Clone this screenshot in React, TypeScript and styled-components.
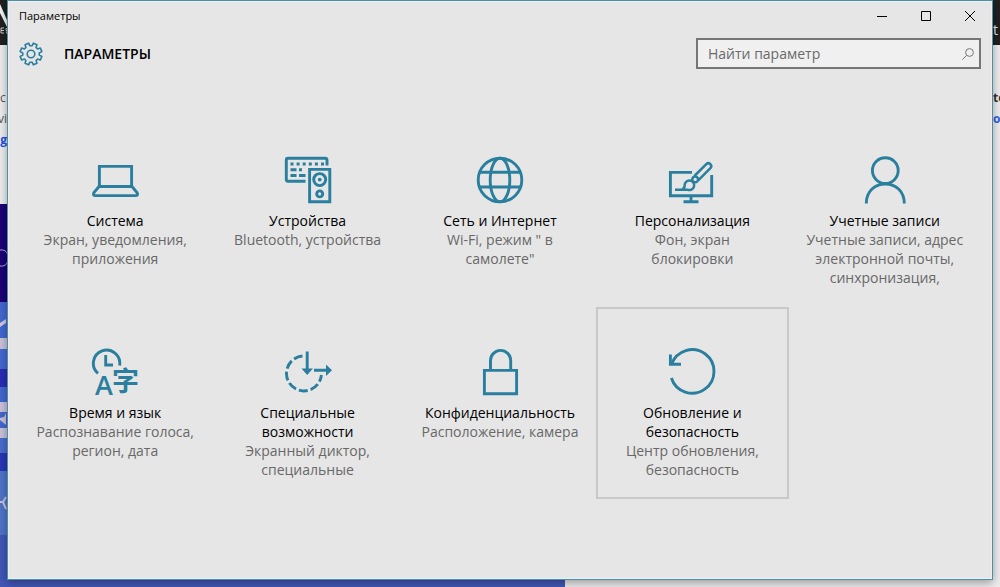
import React from "react";
import styled, { createGlobalStyle } from "styled-components";

const ACCENT = "#2a7f9e";
const SANS = '"Open Sans", "Noto Sans", "Noto Sans CJK SC", sans-serif';

const GlobalStyle = createGlobalStyle`
  * { box-sizing: border-box; }
  body { margin: 0; background: #e0e0e0; font-family: ${SANS}; }
  button, input { font-family: inherit; }
`;

const Desktop = styled.div`
  position: relative;
  min-height: 100vh;
  padding: 0 7px 7px;
  overflow: hidden;
  display: flex;
`;

/* Web page lying behind the settings window */
const Backdrop = styled.div`
  position: absolute;
  inset: 0;
  display: flex;
  flex-direction: column;
  background: #ededed;
`;

const SiteHeader = styled.div`
  height: 45px;
  flex: none;
  background: #202020;
  display: flex;
  justify-content: space-between;
`;

const Article = styled.div`
  flex: none;
  height: 159px;
  padding-top: 42px;
`;

const ArticleLine = styled.div`
  display: flex;
  justify-content: space-between;
  height: 21px;
`;

const Sliver = styled.span<{ $color?: string; $bold?: boolean; $end?: boolean }>`
  display: flex;
  justify-content: ${(p) => (p.$end ? "flex-end" : "flex-start")};
  width: 7px;
  overflow: hidden;
  white-space: nowrap;
  font-size: 12px;
  line-height: 21px;
  font-weight: ${(p) => (p.$bold ? 700 : 400)};
  color: ${(p) => p.$color ?? "#555"};
`;

const HeaderSliver = styled(Sliver)`
  align-self: flex-end;
  font-size: 14px;
  line-height: 30px;
`;

const Photo = styled.div`
  flex: 1;
  width: 565px;
  display: flex;
  flex-direction: column;
  background: #4157b8;
`;

const Band = styled.div<{ $h: number; $c: string }>`
  flex: none;
  height: ${(p) => p.$h}px;
  background: ${(p) => p.$c};
  overflow: hidden;
  svg { display: block; }
`;

const Window = styled.main`
  position: relative;
  flex: 1;
  min-width: 0;
  border: 1px solid #4a90a8;
  background: #e6e6e6;
  box-shadow: inset 0 0 0 1px #efefee, 0 3px 9px rgba(0, 0, 0, 0.35);
`;

const TitleBar = styled.header`
  display: flex;
  justify-content: space-between;
  align-items: center;
  height: 29px;
  padding-left: 11px;
  font-size: 11px;
  line-height: 16px;
  color: #000;
`;

const Controls = styled.div`
  display: flex;
  height: 29px;
`;

const ControlButton = styled.button`
  width: 44px;
  height: 29px;
  padding: 0;
  border: 0;
  background: transparent;
  display: flex;
  align-items: center;
  justify-content: center;
  &:hover { background: #d0d0d0; }
`;

const HeaderRow = styled.div`
  display: flex;
  align-items: center;
  height: 47px;
  padding: 0 11px;
`;

const Heading = styled.h1`
  flex: 1;
  margin: 0 0 0 21px;
  font-size: 14px;
  line-height: 20px;
  font-weight: 600;
  color: #000;
`;

const SearchBox = styled.label`
  display: flex;
  align-items: center;
  width: 285px;
  height: 31px;
  padding: 0 5px 0 10px;
  border: 2px solid #767676;
  background: #f0f0f0;
`;

const SearchInput = styled.input`
  flex: 1;
  min-width: 0;
  padding: 0;
  border: 0;
  outline: 0;
  background: transparent;
  font-size: 14px;
  line-height: 20px;
  color: #000;
  &::placeholder { color: #6a6a6a; opacity: 1; }
`;

const Grid = styled.nav`
  display: grid;
  grid-template-columns: repeat(5, 1fr);
  grid-auto-rows: 192px;
  padding: 38px 11px 80px;
`;

const Tile = styled.a<{ $active?: boolean }>`
  display: flex;
  flex-direction: column;
  align-items: center;
  padding-top: 39px;
  border: 2px solid ${(p) => (p.$active ? "#c9c9c9" : "transparent")};
  text-align: center;
  text-decoration: none;
  font-size: 14px;
  line-height: 19px;
  white-space: pre-line;
`;

const TileIcon = styled.svg`
  width: 48px;
  height: 48px;
  margin-bottom: 7px;
  fill: none;
  stroke: ${ACCENT};
  stroke-width: 2.9;
`;

const TileTitle = styled.span`
  color: #000;
`;

const TileText = styled.span`
  color: #686868;
`;

const Glyph = styled.text<{ $cjk?: boolean }>`
  fill: ${ACCENT};
  stroke: none;
  font-size: 27px;
  font-weight: ${(p) => (p.$cjk ? 700 : 600)};
  font-family: ${(p) => (p.$cjk ? '"Noto Sans CJK SC", sans-serif' : SANS)};
`;

function gearPath() {
  const pts: string[] = [];
  for (let i = 0; i < 8; i++) {
    const mid = 22.5 + i * 45;
    [[-15, 8.3], [-10, 11.1], [10, 11.1], [15, 8.3]].forEach(([d, r]) => {
      const a = ((mid + d) * Math.PI) / 180;
      pts.push(`${(12 + r * Math.cos(a)).toFixed(2)} ${(12 + r * Math.sin(a)).toFixed(2)}`);
    });
  }
  return `M${pts.join("L")}Z`;
}

const Gear = () => (
  <svg width="24" height="24" viewBox="0 0 24 24" fill="none" stroke={ACCENT} strokeWidth="1.6" strokeLinejoin="round">
    <path d={gearPath()} />
    <circle cx="12" cy="12" r="3.8" />
  </svg>
);

const icons: Record<string, React.ReactNode> = {
  system: (
    <>
      <path d="M8.4 31V10.4H40.6V31" />
      <path d="M8 30.5H41L46 36.5Q47.5 39.6 44.5 39.6H4.5Q1.5 39.6 3 36.5Z" />
    </>
  ),
  devices: (
    <>
      <path d="M21.5 25.2H4Q2.3 25.2 2.3 23.5V4Q2.3 2.3 4 2.3H41Q43 2.3 43 4V9.5" />
      <path d="M6.5 8H40" strokeDasharray="3 3.1" strokeWidth="3" />
      <path d="M6.5 13.7H12.5M15 13.7H18M6.5 19.5H12.5M15 19.5H21.5" strokeWidth="3" />
      <path d="M25.6 13.4H45.8V45.8H25.6Z" />
      <circle cx="35.7" cy="23.6" r="6" />
      <circle cx="35.7" cy="23.6" r="1.9" fill={ACCENT} stroke="none" />
      <circle cx="35.7" cy="37.9" r="3" />
    </>
  ),
  network: (
    <>
      <circle cx="24" cy="24" r="21.8" />
      <ellipse cx="24" cy="24" rx="9.8" ry="21.8" />
      <path d="M4 16.3H44M4 31H44" />
    </>
  ),
  personal: (
    <>
      <path d="M24 16.4H2.4V39.8H43.7V19" />
      <path d="M23 40V46M15.5 45.8H30.5" />
      <g strokeWidth="2.5">
        <path d="M26.4 20L38.3 8.1A2.9 2.9 0 0 1 42.4 12.2L30.5 24.1" />
        <circle cx="27.2" cy="23.4" r="2.9" />
        <path d="M7 33.7H19.5A4.8 4.8 0 1 0 16.6 29.5Q16.6 32.5 14 33.7" />
      </g>
    </>
  ),
  accounts: (
    <>
      <circle cx="24.3" cy="14.6" r="12.9" />
      <path d="M5.3 47.5C5.3 35.5 13.5 28 24.3 28S43.3 35.5 43.3 47.5" />
    </>
  ),
  time: (
    <>
      <path d="M7 25.4A13.2 13.2 0 1 1 28.6 17.5" />
      <path d="M14.7 7V17H22" />
      <Glyph x="4" y="47">A</Glyph>
      <Glyph x="21" y="43" $cjk>字</Glyph>
    </>
  ),
  ease: (
    <>
      <path d="M18.5 8A17.5 17.5 0 1 0 37.4 27" strokeDasharray="9 3" />
      <path d="M23.2 3.5V23M30 22.3H42" />
      <path d="M17.5 20.5H29L23.2 27ZM42 16.5L48 22.3L42 28Z" fill={ACCENT} stroke="none" />
    </>
  ),
  privacy: (
    <>
      <path d="M8.4 22.4H40.6V45.8H8.4Z" />
      <path d="M14.5 22V12.5A10.1 10.1 0 0 1 34.7 12.5V22" />
    </>
  ),
  update: (
    <>
      <path d="M3.6 16.2A21.8 21.8 0 1 1 3.4 30" />
      <path d="M2.4 6.5V16.3H13" />
    </>
  ),
};

const tiles = [
  { icon: "system", title: "Система", text: "Экран, уведомления,\nприложения" },
  { icon: "devices", title: "Устройства", text: "Bluetooth, устройства" },
  { icon: "network", title: "Сеть и Интернет", text: "Wi-Fi, режим \" в\nсамолете\"" },
  { icon: "personal", title: "Персонализация", text: "Фон, экран\nблокировки" },
  { icon: "accounts", title: "Учетные записи", text: "Учетные записи, адрес\nэлектронной почты,\nсинхронизация," },
  { icon: "time", title: "Время и язык", text: "Распознавание голоса,\nрегион, дата" },
  { icon: "ease", title: "Специальные\nвозможности", text: "Экранный диктор,\nспециальные" },
  { icon: "privacy", title: "Конфиденциальность", text: "Расположение, камера" },
  { icon: "update", title: "Обновление и\nбезопасность", text: "Центр обновления,\nбезопасность", active: true },
];

export default function App() {
  return (
    <>
      <GlobalStyle />
      <Desktop>
        <Backdrop aria-hidden="true">
          <SiteHeader>
            <svg width="7" height="45" viewBox="0 0 7 45">
              <path d="M0 4L7 20V27L0 13Z" fill="#f4f4f4" />
              <path d="M4 28H1V33H4M1 30.5H4M7 28.5H6V30.5H7V33H6" stroke="#ccc" fill="none" />
            </svg>
            <HeaderSliver $color="#e8e8e8">t</HeaderSliver>
          </SiteHeader>
          <Article>
            <ArticleLine>
              <Sliver>c</Sliver>
              <Sliver $color="#333" $bold>to</Sliver>
            </ArticleLine>
            <ArticleLine>
              <Sliver $end>vi</Sliver>
              <Sliver $color="#2f5be8" $bold>o</Sliver>
            </ArticleLine>
            <ArticleLine>
              <Sliver $color="#2050e8" $bold $end>g</Sliver>
            </ArticleLine>
          </Article>
          <Photo>
            <Band $h={98} $c="#1d0076">
              <svg width="7" height="98" fill="none" stroke="#b4a8d8">
                <path d="M0 46Q6 45 8 51M0 62Q6 63 8 57" />
              </svg>
            </Band>
            <Band $h={36} $c="#4468d0">
              <svg width="7" height="36"><path d="M0 21L6 17V21L0 25Z" fill="#d2cbe0" /></svg>
            </Band>
            <Band $h={11} $c="#c9c2dc" />
            <Band $h={20} $c="#4468d0" />
            <Band $h={18} $c="#2a2db4" />
            <Band $h={15} $c="#4468d0" />
            <Band $h={10} $c="#c9c2dc" />
            <Band $h={16} $c="#4468d0">
              <svg width="7" height="16"><path d="M0 6L4 5L6 1V13L0 8Z" fill="#c9c2dc" /></svg>
            </Band>
            <Band $h={10} $c="#c9c2dc" />
            <Band $h={15} $c="#4a6ccc" />
            <Band $h={18} $c="#2a36b6" />
            <Band $h={64} $c="#4f74c8">
              <svg width="7" height="64" fill="none" stroke="#c9c2dc" strokeWidth="2">
                <path d="M0 31H3L6 26M3 31L6 38" />
              </svg>
            </Band>
          </Photo>
        </Backdrop>

        <Window>
          <TitleBar>
            <span>Параметры</span>
            <Controls>
              <ControlButton aria-label="Свернуть">
                <svg width="10" height="10" stroke="#000"><path d="M0 5.5H10" /></svg>
              </ControlButton>
              <ControlButton aria-label="Развернуть">
                <svg width="10" height="10" fill="none" stroke="#000"><path d="M.5 .5H9.5V9.5H.5Z" /></svg>
              </ControlButton>
              <ControlButton aria-label="Закрыть">
                <svg width="10" height="10" stroke="#000"><path d="M0 0L10 10M10 0L0 10" /></svg>
              </ControlButton>
            </Controls>
          </TitleBar>

          <HeaderRow>
            <Gear />
            <Heading>ПАРАМЕТРЫ</Heading>
            <SearchBox>
              <SearchInput type="text" placeholder="Найти параметр" aria-label="Найти параметр" />
              <svg width="12" height="12" viewBox="0 0 12 12" fill="none" stroke="#777">
                <circle cx="7.5" cy="4.5" r="3.9" />
                <path d="M4.7 7.3L.4 11.6" />
              </svg>
            </SearchBox>
          </HeaderRow>

          <Grid aria-label="Параметры">
            {tiles.map((t) => (
              <Tile key={t.icon} href={`#${t.icon}`} $active={t.active}>
                <TileIcon viewBox="0 0 48 48" aria-hidden="true">{icons[t.icon]}</TileIcon>
                <TileTitle>{t.title}</TileTitle>
                <TileText>{t.text}</TileText>
              </Tile>
            ))}
          </Grid>
        </Window>
      </Desktop>
    </>
  );
}
